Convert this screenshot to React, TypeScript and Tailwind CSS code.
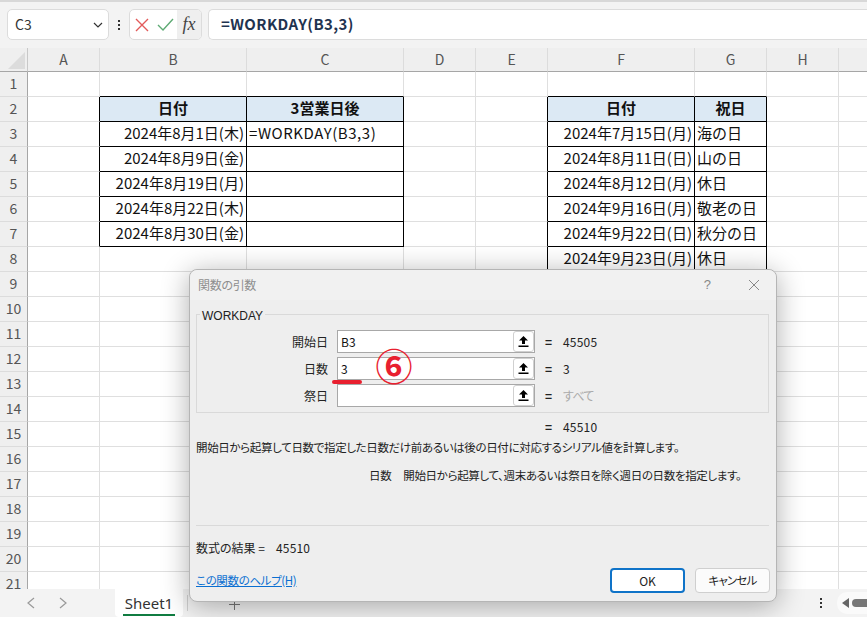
import React from "react";

const cols = ["A", "B", "C", "D", "E", "F", "G", "H", "I"];
const jp = "font-['Noto_Sans_CJK_JP','Noto_Sans',sans-serif]";

type Cell = { t: string; align?: "r" | "c" | "l"; head?: boolean };
const cells: Record<string, Cell> = {
  B2: { t: "日付", head: true, align: "c" },
  C2: { t: "3営業日後", head: true, align: "c" },
  B3: { t: "2024年8月1日(木)", align: "r" },
  B4: { t: "2024年8月9日(金)", align: "r" },
  B5: { t: "2024年8月19日(月)", align: "r" },
  B6: { t: "2024年8月22日(木)", align: "r" },
  B7: { t: "2024年8月30日(金)", align: "r" },
  C3: { t: "=WORKDAY(B3,3)" },
  C4: { t: "" },
  C5: { t: "" },
  C6: { t: "" },
  C7: { t: "" },
  F2: { t: "日付", head: true, align: "c" },
  G2: { t: "祝日", head: true, align: "c" },
  F3: { t: "2024年7月15日(月)", align: "r" },
  F4: { t: "2024年8月11日(日)", align: "r" },
  F5: { t: "2024年8月12日(月)", align: "r" },
  F6: { t: "2024年9月16日(月)", align: "r" },
  F7: { t: "2024年9月22日(日)", align: "r" },
  F8: { t: "2024年9月23日(月)", align: "r" },
  F9: { t: "", align: "r" },
  G3: { t: "海の日" },
  G4: { t: "山の日" },
  G5: { t: "休日" },
  G6: { t: "敬老の日" },
  G7: { t: "秋分の日" },
  G8: { t: "休日" },
  G9: { t: "" },
};

function GridCell({ c, r }: { c: number; r: number }) {
  const key = cols[c] + r;
  const cell = cells[key];
  const rightKey = cols[c + 1] + r;
  const belowKey = cols[c] + (r + 1);
  const blackR = !!cell || !!cells[rightKey];
  const blackB = !!cell || !!cells[belowKey];
  return (
    <div
      className={`h-[25px] pb-[2px] border-r border-b flex items-center overflow-visible whitespace-nowrap text-[15px] text-[#111] ${
        blackR ? "border-r-black" : "border-r-[#dfdfdf]"
      } ${blackB ? "border-b-black" : "border-b-[#dfdfdf]"} ${cell?.head ? "bg-[#dce9f4] font-bold" : ""} ${
        key === "C3" ? "tracking-[0.55px]" : ""
      } ${cell?.align === "r" ? "justify-end pr-[2px]" : cell?.align === "c" ? "justify-center" : "pl-[2px]"}`}
    >
      {cell?.t}
    </div>
  );
}

function RefBtn() {
  return (
    <div className="w-[21px] h-[21px] shrink-0 bg-white border border-[#d0d0d0] rounded-[3px] flex items-center justify-center">
      <svg width="11" height="13" viewBox="0 0 11 13">
        <path d="M5.5 1 L10 5.5 H7 V9 H4 V5.5 H1 Z" fill="#000" />
        <rect x="0.5" y="10.5" width="10" height="1.5" fill="#000" />
      </svg>
    </div>
  );
}

function ArgRow({ label, value, result, muted }: { label: string; value: string; result: string; muted?: boolean }) {
  return (
    <div className="flex items-center h-[23px]">
      <div className="w-[132px] text-right pr-[1px] text-[12px] text-[#222]">{label}</div>
      <div className="ml-[8px] w-[198px] h-[23px] flex items-center justify-between bg-white border border-[#a8a8a8]">
        <span className="pl-[3px] text-[12px] text-[#111]">{value}</span>
        <RefBtn />
      </div>
      <span className="ml-[10px] w-[18px] text-[12px] font-bold text-[#222]">=</span>
      <span className={`text-[12px] ${muted ? "text-[#aaa] tracking-[-0.8px]" : "text-[#222] tracking-[0.2px]"}`}>{result}</span>
    </div>
  );
}

export default function App() {
  const rows = Array.from({ length: 21 }, (_, i) => i + 1);
  return (
    <div className={`relative w-[867px] h-[617px] overflow-hidden bg-[#f3f3f3] flex flex-col ${jp}`}>
      {/* formula bar */}
      <div className="h-[48px] shrink-0 bg-[#f3f3f3] border-t-[2px] border-[#d8d8d8] flex items-start pt-[7px] pl-[7px]">
        <div className="w-[102px] h-[31px] bg-white border border-[#dcdcdc] rounded-[5px] flex items-center justify-between pl-[7px] pr-[5px] text-[14px] text-[#333]">
          <span>C3</span>
          <svg width="10" height="6" viewBox="0 0 10 6" fill="none" stroke="#333" strokeWidth="1.2">
            <path d="M1 1 L5 5 L9 1" />
          </svg>
        </div>
        <div className="w-[20px] h-[31px] flex flex-col items-center justify-center gap-[2px]">
          <i className="w-[2px] h-[2px] bg-[#333]" />
          <i className="w-[2px] h-[2px] bg-[#333]" />
          <i className="w-[2px] h-[2px] bg-[#333]" />
        </div>
        <div className="w-[73px] h-[31px] bg-white border border-[#dcdcdc] rounded-[5px] flex items-center overflow-hidden">
          <svg className="ml-[5px]" width="14" height="14" viewBox="0 0 14 14" fill="none" stroke="#e25a5a" strokeWidth="1.4">
            <path d="M1 1 L13 13 M13 1 L1 13" />
          </svg>
          <svg className="ml-[8px]" width="17" height="13" viewBox="0 0 17 13" fill="none" stroke="#5eaa74" strokeWidth="1.4">
            <path d="M1 7 L6 12 L16 1" />
          </svg>
          <div className="ml-[3px] flex-1 h-full bg-[#efefef] flex items-center justify-center text-[18px] italic font-medium font-['Liberation_Serif',serif] text-[#444]">
            fx
          </div>
        </div>
        <div className="ml-[6px] flex-1 h-[31px] bg-white border border-[#dcdcdc] border-r-0 rounded-l-[5px] flex items-center pl-[12px] text-[15px] tracking-[0.4px] font-bold text-[#1f3350]">
          =WORKDAY(B3,3)
        </div>
      </div>

      {/* sheet */}
      <div className="flex-1 min-h-0 overflow-hidden bg-white">
        <div className="grid grid-cols-[28px_72px_147px_157px_72px_72px_147px_72px_72px_72px]">
          <div className="h-[24px] bg-[#efefef] border-r border-b border-r-[#c8c8c8] border-b-[#a6a6a6] flex items-end justify-end p-[2px]">
            <svg width="17" height="17" viewBox="0 0 17 17">
              <path d="M17 0 V17 H0 Z" fill="#dcdcdc" />
            </svg>
          </div>
          {cols.map((c, i) => (
            <div
              key={i}
              className="h-[24px] bg-[#efefef] border-r border-b border-r-[#dcdcdc] border-b-[#a6a6a6] flex items-center justify-center text-[14px] text-[#555]"
            >
              {c === "I" ? "" : c}
            </div>
          ))}
          {rows.map((r) => (
            <React.Fragment key={r}>
              <div className="h-[25px] pb-[2px] bg-[#efefef] border-r border-b border-r-[#a6a6a6] border-b-[#dcdcdc] flex items-center justify-center text-[14px] text-[#555]">
                {r}
              </div>
              {cols.map((_, c) => (
                <GridCell key={c} c={c} r={r} />
              ))}
            </React.Fragment>
          ))}
        </div>
      </div>

      {/* sheet tabs */}
      <div className="h-[28px] shrink-0 bg-[#f3f3f3] flex items-stretch text-[#666]">
        <div className="w-[115px] flex items-center pl-[27px] gap-[24px]">
          <svg width="8" height="12" viewBox="0 0 8 12" fill="none" stroke="#999" strokeWidth="1.2">
            <path d="M7 1 L1 6 L7 11" />
          </svg>
          <svg width="8" height="12" viewBox="0 0 8 12" fill="none" stroke="#999" strokeWidth="1.2">
            <path d="M1 1 L7 6 L1 11" />
          </svg>
        </div>
        <div className="w-[68px] bg-white rounded-b-[4px] flex flex-col items-center pt-[5px] text-[15px] text-[#333] font-['Noto_Sans',sans-serif]">
          <span className="leading-[18px]">Sheet1</span>
          <i className="mt-[2px] w-[52px] h-[2px] bg-[#107c41]" />
        </div>
        <i className="ml-[4px] my-[6px] w-[1px] bg-[#cfcfcf]" />
        <div className="ml-[41px] w-[11px] flex items-center justify-center pt-[2px]">
          <svg width="11" height="11" viewBox="0 0 11 11" stroke="#777" strokeWidth="1">
            <path d="M5.5 0 V11 M0 5.5 H11" />
          </svg>
        </div>
        <div className="flex-1" />
        <div className="w-[14px] flex flex-col items-center justify-center gap-[2px]">
          <i className="w-[2px] h-[2px] bg-[#333]" />
          <i className="w-[2px] h-[2px] bg-[#333]" />
          <i className="w-[2px] h-[2px] bg-[#333]" />
        </div>
        <div className="ml-[9px] w-[30px] my-[3px] bg-[#fafafa] rounded-l-[10px] flex items-center pl-[5px] gap-[3px]">
          <svg width="7" height="10" viewBox="0 0 7 10">
            <path d="M7 0 V10 L0 5 Z" fill="#666" />
          </svg>
          <i className="flex-1 h-[8px] bg-[#777] rounded-l-[4px]" />
        </div>
      </div>

      {/* dialog */}
      <div className="absolute left-[189px] top-[269px] w-[588px] h-[333px] bg-[#eeeeee] border border-[#b5b5b5] rounded-[8px] shadow-[0_4px_28px_rgba(0,0,0,0.32)] flex flex-col pl-[6px] pr-[7px] [font-feature-settings:'palt']">
        <div className="-ml-[6px] -mr-[7px] h-[30px] shrink-0 bg-[#f1f1f1] rounded-t-[8px] flex items-center justify-between pl-[8px] pr-[16px]">
          <span className="text-[12px] tracking-[-0.3px] text-[#8e8e8e]">関数の引数</span>
          <div className="flex items-center gap-[37px]">
            <span className="text-[13px] text-[#888] font-['Liberation_Sans',sans-serif]">?</span>
            <svg width="12" height="12" viewBox="0 0 12 12" fill="none" stroke="#888" strokeWidth="1">
              <path d="M1 1 L11 11 M11 1 L1 11" />
            </svg>
          </div>
        </div>
        <fieldset className="mt-[7px] h-[106px] border border-[#d9d9d9] min-w-0 pt-[8px]">
          <legend className="ml-[3px] px-[2px] text-[12px] leading-[15px] text-[#222] translate-y-[2px] font-['Liberation_Sans',sans-serif]">WORKDAY</legend>
          <div className="flex flex-col gap-[4px]">
            <ArgRow label="開始日" value="B3" result="45505" />
            <ArgRow label="日数" value="3" result="3" />
            <ArgRow label="祭日" value="" result="すべて" muted />
          </div>
        </fieldset>
        <div className="mt-[5px] h-[18px] pl-[349px] flex items-center text-[12px] text-[#222]">
          <span className="w-[18px] font-bold">=</span>
          <span className="tracking-[0.2px]">45510</span>
        </div>
        <p className="mt-[2px] h-[18px] leading-[18px] text-[11.5px] tracking-[-0.35px] text-[#222] whitespace-nowrap">
          開始日から起算して日数で指定した日数だけ前あるいは後の日付に対応するシリアル値を計算します。
        </p>
        <p className="mt-[10px] h-[18px] leading-[18px] pl-[173px] text-[11.5px] tracking-[-0.35px] text-[#222] whitespace-nowrap">
          日数<span className="ml-[12px]">開始日から起算して、週末あるいは祭日を除く週日の日数を指定します。</span>
        </p>
        <div className="mt-[41px] h-[1px] bg-[#d9d9d9] shrink-0" />
        <div className="mt-[13px] h-[18px] leading-[18px] text-[12px] text-[#222] whitespace-nowrap">
          数式の結果 =<span className="ml-[11px] tracking-[0.2px]">45510</span>
        </div>
        <div className="mt-[11px] flex items-center justify-between">
          <a className="text-[11.5px] tracking-[-0.35px] text-[#0a6fd1] underline">この関数のヘルプ(H)</a>
          <div className="flex gap-[10px] mr-[-1px]">
            <button className="w-[75px] h-[25px] bg-white border-2 border-[#0f73c8] rounded-[4px] text-[12px] text-[#222]">OK</button>
            <button className="w-[75px] h-[25px] bg-[#fbfbfb] border border-[#cfcfcf] rounded-[4px] text-[11.5px] tracking-[-0.8px] text-[#222]">キャンセル</button>
          </div>
        </div>
      </div>

      {/* annotation */}
      <span className="absolute left-[372px] top-[344px] w-[44px] h-[42px] flex items-center justify-center text-[37px] leading-[42px] font-bold text-[#e8202f]">
        ⑥
      </span>
      <i className="absolute left-[332px] top-[380px] w-[30px] h-[4px] rounded-full bg-[#e8202f]" />
    </div>
  );
}
